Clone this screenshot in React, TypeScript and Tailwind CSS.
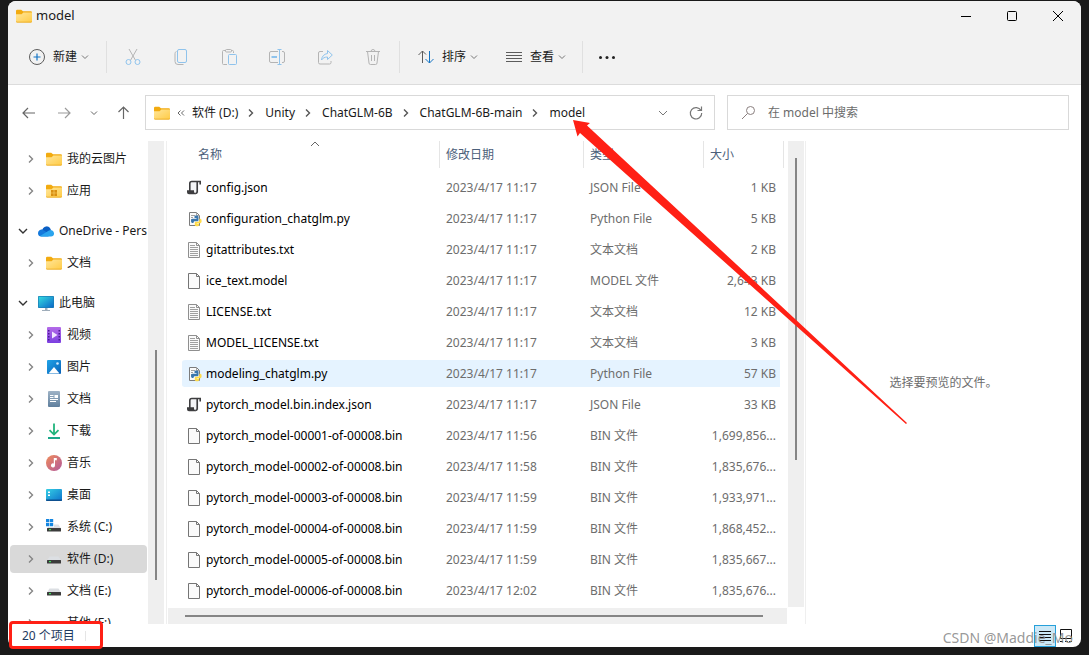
import { ReactNode } from 'react'

/* ---------- icons ---------- */

function Svg({
  children,
  size = 16,
  className = '',
}: {
  children: ReactNode
  size?: number
  className?: string
}) {
  return (
    <svg
      width={size}
      height={size}
      viewBox={`0 0 ${size} ${size}`}
      fill="none"
      className={`shrink-0 ${className}`}
      aria-hidden="true"
    >
      {children}
    </svg>
  )
}

function FolderIcon({ apps = false }: { apps?: boolean }) {
  return (
    <Svg>
      <defs>
        <linearGradient id="folder" x1="0" y1="0" x2="1" y2="1">
          <stop offset="0" stopColor="#ffe69b" />
          <stop offset="1" stopColor="#ffcb45" />
        </linearGradient>
      </defs>
      <path d="M0 3a1.2 1.2 0 0 1 1.2-1.2h4L7 3.3h7.8A1.2 1.2 0 0 1 16 4.5V8H0z" fill="#f2ab10" />
      <path d="M0 6.3h5.6L7.4 4.4H16v8.9a1.2 1.2 0 0 1-1.2 1.2H1.2A1.2 1.2 0 0 1 0 13.3z" fill="url(#folder)" />
      <path d="M0 13.3a1.2 1.2 0 0 0 1.2 1.2h13.6A1.2 1.2 0 0 0 16 13.3v-.3a1 1 0 0 1-1 .7H1a1 1 0 0 1-1-.7z" fill="#e8a317" />
      {apps && (
        <path d="M5 7h2.7v2.7H5zM8.3 7H11v2.7H8.3zM5 10.3h2.7V13H5zM8.3 10.3H11V13H8.3z" fill="#d98f10" />
      )}
    </Svg>
  )
}

function CloudIcon() {
  return (
    <Svg>
      <path d="M4.500 6.500A4.300 4.300 0 0 1 12.600 6l.4 1.500-6 3-5.500.5A3.500 3.500 0 0 1 4.500 6.500z" fill="#0a5fc4" />
      <path d="M0 10.300a3.600 3.600 0 0 1 5.600-3.100L13 12l-3 1.500H3.500A3.400 3.400 0 0 1 0 10.300z" fill="#1479dc" />
      <path d="M2 13l9-5.500a3.300 3.300 0 0 1 5 2.800 3 3 0 0 1-3 3.200H3.400A3 3 0 0 1 2 13z" fill="#2aa4ee" />
    </Svg>
  )
}

function MonitorIcon() {
  return (
    <Svg>
      <defs>
        <linearGradient id="monitor" x1="0" y1="0" x2="1" y2="1">
          <stop offset="0" stopColor="#35dbe0" />
          <stop offset="1" stopColor="#0c68c8" />
        </linearGradient>
      </defs>
      <rect y="1" width="16" height="12" rx="0.8" fill="#1b7cb4" />
      <rect x="0.7" y="1.7" width="14.6" height="10.6" fill="url(#monitor)" />
      <path d="M7 13h2.500v2H12v1H4v-1h3z" fill="#9fadba" />
    </Svg>
  )
}

function VideoIcon() {
  return (
    <Svg>
      <defs>
        <linearGradient id="video" x1="0" y1="0" x2="0" y2="1">
          <stop offset="0" stopColor="#b46be8" />
          <stop offset="1" stopColor="#7b3fe0" />
        </linearGradient>
      </defs>
      <rect x="1" width="14" height="16" rx="1" fill="url(#video)" />
      <path d="M2 3h1.500v1.500H2zM2 6h1.500v1.500H2zM2 9h1.500v1.500H2zM2 12h1.500v1.500H2zM12.500 3H14v1.500h-1.500zM12.500 6H14v1.500h-1.500zM12.500 9H14v1.500h-1.500zM12.500 12H14v1.500h-1.500z" fill="#4b1c93" />
      <path d="M6 4.500 11.500 8 6 11.500z" fill="#f1e6ff" />
    </Svg>
  )
}

function PictureIcon() {
  return (
    <Svg>
      <defs>
        <linearGradient id="picture" x1="0" y1="0" x2="1" y2="1">
          <stop offset="0" stopColor="#20a4e8" />
          <stop offset="1" stopColor="#0961b8" />
        </linearGradient>
      </defs>
      <rect x="1" y="1" width="14" height="14" rx="1" fill="url(#picture)" />
      <path d="M2.500 14.500 8 8l5.500 6.500z" fill="#fff" />
      <circle cx="11.500" cy="4.500" r="1.300" fill="#cfeaff" />
    </Svg>
  )
}

function DocsIcon() {
  return (
    <Svg>
      <defs>
        <linearGradient id="docs" x1="0" y1="0" x2="0" y2="1">
          <stop offset="0" stopColor="#9fb3c6" />
          <stop offset="1" stopColor="#5f7f9d" />
        </linearGradient>
      </defs>
      <rect x="2" width="12" height="16" rx="1" fill="url(#docs)" />
      <path d="M4 4h3.500v1H4zM4 6h3.500v1H4zM8.500 4H12v3H8.500zM4 8h8v1H4zM4 10h6v1H4z" fill="#fff" />
    </Svg>
  )
}

function DownloadIcon() {
  return (
    <Svg>
      <path d="M8 .5v11M3.500 7.200 8 11.600l4.500-4.400" stroke="#20b47c" strokeWidth="1.800" />
      <path d="M2 15h12" stroke="#1ba88a" strokeWidth="1.800" />
    </Svg>
  )
}

function MusicIcon() {
  return (
    <Svg>
      <defs>
        <linearGradient id="music" x1="0" y1="0" x2="1" y2="1">
          <stop offset="0" stopColor="#f08c5a" />
          <stop offset="1" stopColor="#b1589c" />
        </linearGradient>
      </defs>
      <circle cx="8" cy="8" r="8" fill="url(#music)" />
      <path d="M7.800 3h3v2.200H9v5.300a2 2 0 1 1-1.200-1.900z" fill="#fff" />
    </Svg>
  )
}

function DesktopIcon() {
  return (
    <Svg>
      <defs>
        <linearGradient id="desktop" x1="0" y1="0" x2="1" y2="1">
          <stop offset="0" stopColor="#35cfe4" />
          <stop offset="1" stopColor="#0d72cc" />
        </linearGradient>
      </defs>
      <rect y="2" width="16" height="12" rx="1" fill="url(#desktop)" />
      <path d="M0 12.500h16V13a1 1 0 0 1-1 1H1a1 1 0 0 1-1-1z" fill="#0d4f8f" />
      <path d="M2 4.500h2V6H2zM2 7.500h2V9H2z" fill="#fff" />
    </Svg>
  )
}

function DriveIcon({ system = false }: { system?: boolean }) {
  return (
    <Svg>
      <path d="M3.500 5.500h9l2.500 4H1z" fill="#dcdfe3" />
      <rect x="1" y="9" width="14" height="3.5" rx="0.500" fill="#3b3b3b" />
      <rect x="3" y="10" width="2" height="1.200" fill="#3fe05c" />
      {system && (
        <>
          <rect width="8" height="8" fill="#fff" />
          <path d="M0 0h3.300v3.300H0zM3.900 0h3.300v3.300H3.900zM0 3.900h3.300v3.300H0zM3.900 3.900h3.300v3.300H3.900z" fill="#1486e0" />
        </>
      )}
    </Svg>
  )
}

function PageIcon({ lines = false }: { lines?: boolean }) {
  const stroke = lines ? '#8f8f8f' : '#757575'
  return (
    <Svg>
      <path d="M2.500.5h8l3 3v12h-11z" fill="#fafafa" stroke={stroke} />
      <path d="M10.500.5v3h3" stroke={stroke} />
      {lines && (
        <path d="M4 3.500h5M4 5.500h8M4 7.500h8M4 9.500h8M4 11.500h8M4 13.500h8" stroke="#a0a0a0" />
      )}
    </Svg>
  )
}

function JsonIcon() {
  return (
    <Svg>
      <path d="M4 1h9v10.500a2 2 0 0 1-2 2H4z" fill="#f4f5f7" />
      <path d="M3.800 11V3.500a2 2 0 0 1 2-2h8.400v3M11.200 2v9.500a2 2 0 0 1-2 2" stroke="#3d3d3f" strokeWidth="1.600" />
      <path d="M1 10.200h7v1.300A1.500 1.500 0 0 0 9.500 13v1.300H3a2 2 0 0 1-2-2z" fill="#3d3d3f" />
    </Svg>
  )
}

function PythonIcon() {
  return (
    <Svg>
      <path d="M3.500 1.500h7l3 3v10h-10z" fill="#fafafa" stroke="#7c7c7c" />
      <path d="M10.500 1.500v3h3M5 4.500h4M5 6.500h2M5 8.500h1" stroke="#a3a3a3" />
      <path d="M8.500 5.500c0-.8.8-1 2-1s2 .3 2 1.200V9c0 .8-.6 1.300-1.400 1.300H8.800c-.8 0-1.300.6-1.300 1.700H6.300C5.400 12 5 11 5 9.800S5.500 7.700 6.500 7.700h4V7h-2z" fill="#3a76ad" />
      <path d="M13.300 7.800h1c.9 0 1.300.8 1.300 2.200 0 1.300-.5 2.200-1.300 2.200h-3.500v.6h2.300v1.200c0 .8-.9 1.300-2.100 1.300s-2.200-.5-2.200-1.300v-2c0-.8.6-1.300 1.400-1.300H12c.8 0 1.300-.6 1.300-1.400z" fill="#ffdc4c" />
    </Svg>
  )
}

function ChevronDown({ className = '' }: { className?: string }) {
  return (
    <Svg size={8} className={className}>
      <path d="M1 2.500 4 5.500l3-3" stroke="currentColor" />
    </Svg>
  )
}

function ChevronRight({ className = '' }: { className?: string }) {
  return (
    <Svg size={10} className={className}>
      <path d="M3 1.500 6.500 5 3 8.500" stroke="currentColor" strokeWidth="1.400" />
    </Svg>
  )
}

const GRAY = '#b4b4b4'
const BLUE = '#8fc3ec'

const toolIcons = [
  {
    label: '剪切',
    icon: (
      <>
        <path d="M4 0l6.500 11.300M12 0 5.500 11.300" stroke={GRAY} />
        <circle cx="3.500" cy="13" r="2.500" stroke={BLUE} />
        <circle cx="12.500" cy="13" r="2.500" stroke={BLUE} />
      </>
    ),
  },
  {
    label: '复制',
    icon: (
      <>
        <path d="M3.500 2.500c-1 .3-1.500 1-1.500 2v8a3 3 0 0 0 3 3h5.500" stroke={GRAY} />
        <rect x="4.500" y="0.500" width="9" height="13" rx="1.500" stroke={BLUE} />
      </>
    ),
  },
  {
    label: '粘贴',
    icon: (
      <>
        <path d="M6 15.500H2.500a1 1 0 0 1-1-1v-12a1 1 0 0 1 1-1H5m5 0h1.500a1 1 0 0 1 1 1V4" stroke={GRAY} />
        <rect x="4.500" y="0.500" width="6" height="2.500" rx="1" stroke={GRAY} />
        <rect x="7.500" y="5.500" width="8" height="10" rx="1" stroke={BLUE} />
      </>
    ),
  },
  {
    label: '重命名',
    icon: (
      <>
        <path d="M9 13.500H2A1.500 1.500 0 0 1 .5 12V4A1.500 1.500 0 0 1 2 2.500h7M13 2.500h1A1.500 1.500 0 0 1 15.500 4v8a1.500 1.500 0 0 1-1.500 1.500h-1" stroke={GRAY} />
        <path d="M8.500 .5h4M8.500 15.500h4M10.500 .5v15" stroke={BLUE} />
        <path d="M2.500 8H8" stroke={BLUE} strokeWidth="2" />
      </>
    ),
  },
  {
    label: '共享',
    icon: (
      <>
        <path d="M6 2.500H3A1.500 1.500 0 0 0 1.500 4v9.500A1.500 1.500 0 0 0 3 15h9.500a1.500 1.500 0 0 0 1.500-1.500V12" stroke={GRAY} />
        <path d="M10.500 1.500 15.300 6l-4.800 4.500V8C7.500 8 6 9 4.500 11c.3-3.500 2.500-6 6-6.500z" stroke={BLUE} strokeLinejoin="round" />
      </>
    ),
  },
  {
    label: '删除',
    icon: (
      <path d="M1 2.500h14M2.500 2.500 4 14a1.500 1.500 0 0 0 1.500 1.500h5A1.500 1.500 0 0 0 12 14l1.500-11.500M6 2.500a2 2 0 0 1 4 0M6.500 6v6M9.500 6v6" stroke={GRAY} />
    ),
  },
]

/* ---------- data ---------- */

interface NavItem {
  label: string
  icon: ReactNode
  root?: boolean
  selected?: boolean
}

const navGroups: NavItem[][] = [
  [
    { label: '我的云图片', icon: <FolderIcon /> },
    { label: '应用', icon: <FolderIcon apps /> },
  ],
  [
    { label: 'OneDrive - Personal', icon: <CloudIcon />, root: true },
    { label: '文档', icon: <FolderIcon /> },
  ],
  [
    { label: '此电脑', icon: <MonitorIcon />, root: true },
    { label: '视频', icon: <VideoIcon /> },
    { label: '图片', icon: <PictureIcon /> },
    { label: '文档', icon: <DocsIcon /> },
    { label: '下载', icon: <DownloadIcon /> },
    { label: '音乐', icon: <MusicIcon /> },
    { label: '桌面', icon: <DesktopIcon /> },
    { label: '系统 (C:)', icon: <DriveIcon system /> },
    { label: '软件 (D:)', icon: <DriveIcon />, selected: true },
    { label: '文档 (E:)', icon: <DriveIcon /> },
    { label: '其他 (F:)', icon: <DriveIcon /> },
  ],
]

const crumbs = ['软件 (D:)', 'Unity', 'ChatGLM-6B', 'ChatGLM-6B-main', 'model']

const files = [
  { name: 'config.json', date: '2023/4/17 11:17', type: 'JSON File', size: '1 KB' },
  { name: 'configuration_chatglm.py', date: '2023/4/17 11:17', type: 'Python File', size: '5 KB' },
  { name: 'gitattributes.txt', date: '2023/4/17 11:17', type: '文本文档', size: '2 KB' },
  { name: 'ice_text.model', date: '2023/4/17 11:17', type: 'MODEL 文件', size: '2,643 KB' },
  { name: 'LICENSE.txt', date: '2023/4/17 11:17', type: '文本文档', size: '12 KB' },
  { name: 'MODEL_LICENSE.txt', date: '2023/4/17 11:17', type: '文本文档', size: '3 KB' },
  { name: 'modeling_chatglm.py', date: '2023/4/17 11:17', type: 'Python File', size: '57 KB', active: true },
  { name: 'pytorch_model.bin.index.json', date: '2023/4/17 11:17', type: 'JSON File', size: '33 KB' },
  { name: 'pytorch_model-00001-of-00008.bin', date: '2023/4/17 11:56', type: 'BIN 文件', size: '1,699,856...' },
  { name: 'pytorch_model-00002-of-00008.bin', date: '2023/4/17 11:58', type: 'BIN 文件', size: '1,835,676...' },
  { name: 'pytorch_model-00003-of-00008.bin', date: '2023/4/17 11:59', type: 'BIN 文件', size: '1,933,971...' },
  { name: 'pytorch_model-00004-of-00008.bin', date: '2023/4/17 11:59', type: 'BIN 文件', size: '1,868,452...' },
  { name: 'pytorch_model-00005-of-00008.bin', date: '2023/4/17 11:59', type: 'BIN 文件', size: '1,835,667...' },
  { name: 'pytorch_model-00006-of-00008.bin', date: '2023/4/17 12:02', type: 'BIN 文件', size: '1,835,676...' },
]

function fileIcon(name: string) {
  if (name.endsWith('.json')) return <JsonIcon />
  if (name.endsWith('.py')) return <PythonIcon />
  return <PageIcon lines={name.endsWith('.txt')} />
}

/* ---------- sections ---------- */

function TitleBar() {
  return (
    <header className="flex h-[29px] items-center pl-2">
      <FolderIcon />
      <h1 className="ml-1 flex-1 text-[13px]">model</h1>
      <button aria-label="最小化" className="flex h-7 w-[46px] items-center justify-center">
        <Svg size={10}>
          <path d="M0 5.500h10" stroke="#000" />
        </Svg>
      </button>
      <button aria-label="最大化" className="flex h-7 w-[46px] items-center justify-center">
        <Svg size={10}>
          <rect x="0.500" y="0.500" width="9" height="9" rx="1" stroke="#000" />
        </Svg>
      </button>
      <button aria-label="关闭" className="flex h-7 w-[46px] items-center justify-center">
        <Svg size={10}>
          <path d="m0 0 10 10M10 0 0 10" stroke="#000" />
        </Svg>
      </button>
    </header>
  )
}

function Toolbar() {
  return (
    <div className="flex h-[55px] items-center border-b border-[#dcdcdc] pl-[21px]">
      <button className="flex items-center gap-2">
        <Svg>
          <circle cx="8" cy="8" r="7.500" stroke="#5c5c5c" />
          <path d="M8 4.500v7M4.500 8h7" stroke="#1474c4" strokeWidth="1.200" />
        </Svg>
        新建
        <ChevronDown className="-ml-1 text-[#777]" />
      </button>
      <div className="ml-[17px] mr-[18px] h-8 w-px bg-[#e0e0e0]" />
      <div className="flex gap-8">
        {toolIcons.map((tool) => (
          <button key={tool.label} aria-label={tool.label}>
            <Svg>{tool.icon}</Svg>
          </button>
        ))}
      </div>
      <div className="mx-[18px] h-8 w-px bg-[#e0e0e0]" />
      <button className="flex items-center gap-2">
        <Svg>
          <path d="M4.500 14V2M.5 6l4-4L8 5.500" stroke="#5c5c5c" />
          <path d="M11.500 2v12M7.500 10l4 4 4-4" stroke="#1474c4" />
        </Svg>
        排序
        <ChevronDown className="-ml-1 text-[#777]" />
      </button>
      <button className="ml-7 flex items-center gap-2">
        <Svg>
          <path d="M0 3.500h16M0 6.500h16M0 9.500h16M0 12.500h16" stroke="#5c5c5c" />
        </Svg>
        查看
        <ChevronDown className="-ml-1 text-[#777]" />
      </button>
      <div className="mx-4 h-8 w-px bg-[#e0e0e0]" />
      <button aria-label="更多">
        <Svg>
          <circle cx="1.500" cy="8.500" r="1.500" fill="#222" />
          <circle cx="8" cy="8.500" r="1.500" fill="#222" />
          <circle cx="14.500" cy="8.500" r="1.500" fill="#222" />
        </Svg>
      </button>
    </div>
  )
}

function AddressRow() {
  return (
    <div className="flex h-14 items-start pl-[13px] pr-3 pt-[10px]">
      <div className="flex h-[35px] w-[124px] shrink-0 items-center text-[#666]">
        <button aria-label="后退">
          <Svg>
            <path d="M14 8H2M7 3 2 8l5 5" stroke="#666" strokeWidth="1.200" />
          </Svg>
        </button>
        <button aria-label="前进" className="ml-5">
          <Svg>
            <path d="M1 8h12M8 3l5 5-5 5" stroke="#9a9a9a" strokeWidth="1.200" />
          </Svg>
        </button>
        <button aria-label="最近浏览的位置" className="ml-[17px]">
          <ChevronDown />
        </button>
        <button aria-label="上移" className="ml-[17px]">
          <Svg>
            <path d="M8.500 14V2M3.500 7l5-5 5 5" stroke="#666" strokeWidth="1.200" />
          </Svg>
        </button>
      </div>
      <nav aria-label="路径" className="flex h-[35px] min-w-0 flex-[550] items-center border border-[#d9d9d9] pl-2 pr-[10px]">
        <FolderIcon />
        <Svg size={8} className="mx-[7px]">
          <path d="M3.500 1.500 1 4l2.500 2.500M7 1.500 4.500 4 7 6.500" stroke="#666" />
        </Svg>
        <ol className="flex flex-1 items-center whitespace-nowrap">
          {crumbs.map((crumb, i) => (
            <li key={crumb} className="flex items-center">
              {i > 0 && <ChevronRight className="ml-2 mr-[9px] text-[#555]" />}
              <a href="#">{crumb}</a>
            </li>
          ))}
        </ol>
        <button aria-label="历史记录" className="mr-5">
          <Svg size={10}>
            <path d="m1 3 4 4 4-4" stroke="#777" />
          </Svg>
        </button>
        <button aria-label="刷新">
          <Svg>
            <path d="M13 5.500A5.700 5.700 0 1 0 13.700 8M13.500 1.500v4h-4" stroke="#777" strokeWidth="1.200" />
          </Svg>
        </button>
      </nav>
      <label className="ml-3 flex h-[35px] flex-[326] items-center border border-[#d9d9d9] pl-[14px]">
        <Svg className="mr-1.5">
          <circle cx="8.500" cy="5.500" r="4" stroke="#8a7f7f" />
          <path d="M5.500 8.500 0 14" stroke="#8a7f7f" />
        </Svg>
        <input
          type="search"
          aria-label="搜索"
          placeholder="在 model 中搜索"
          className="w-full px-1 outline-none placeholder:text-[#6b6b6b]"
        />
      </label>
    </div>
  )
}

function NavPane() {
  return (
    <aside className="flex w-[156px] shrink-0">
      <nav aria-label="导航" className="flex min-w-0 flex-1 flex-col gap-2 overflow-hidden pl-0.5 pr-px pt-0.5">
        {navGroups.map((group, g) => (
          <ul key={g}>
            {group.map((item) => (
              <li key={item.label} className="h-8 py-0.5">
                <a
                  href="#"
                  className={`flex h-7 items-center gap-[5px] overflow-hidden whitespace-nowrap rounded-sm ${
                    item.root ? 'pl-2' : 'pl-4'
                  } ${item.selected ? 'bg-[#d9d9d9]' : ''}`}
                >
                  {item.root ? (
                    <Svg size={10} className="mr-[5px]">
                      <path d="m1 3 4 4 4-4" stroke="#333" strokeWidth="1.400" />
                    </Svg>
                  ) : (
                    <ChevronRight className="mr-[5px] text-[#858585]" />
                  )}
                  {item.icon}
                  {item.label}
                </a>
              </li>
            ))}
          </ul>
        ))}
      </nav>
      <div className="flex w-4 shrink-0 justify-center bg-[#efefef] pt-[209px]">
        <div className="h-[230px] w-0.5 bg-[#858585]" />
      </div>
    </aside>
  )
}

function FileList() {
  return (
    <main className="ml-0.5 flex w-[640px] shrink-0 flex-col border-x border-[#efefef]">
      <div className="flex min-h-0 flex-1">
        <div className="relative flex-1 overflow-hidden pl-[15px]">
          <Svg size={10} className="absolute left-[143px] top-0">
            <path d="m1 5 4-4 4 4" stroke="#666" />
          </Svg>
          <table className="w-[602px] table-fixed border-separate border-spacing-0 text-left">
            <thead className="text-[#4c607a]">
              <tr className="h-[31px] align-top">
                <th className="w-[258px] pl-4 font-normal">
                  <div className="h-[27px] border-r border-[#e5e5e5] leading-[27px]">名称</div>
                </th>
                <th className="w-36 font-normal">
                  <div className="h-[27px] border-r border-[#e5e5e5] pl-1.5 leading-[27px]">修改日期</div>
                </th>
                <th className="w-[120px] font-normal">
                  <div className="h-[27px] border-r border-[#e5e5e5] pl-1.5 leading-[27px]">类型</div>
                </th>
                <th className="font-normal">
                  <div className="h-[27px] border-r border-[#e5e5e5] pl-1.5 leading-[27px]">大小</div>
                </th>
              </tr>
            </thead>
            <tbody className="whitespace-nowrap text-[#6d6d6d]">
              {files.map((file) => (
                <tr
                  key={file.name}
                  className={`h-[31px] *:border-y-2 *:border-transparent *:bg-clip-padding ${
                    file.active ? '*:bg-[#e5f3ff]' : ''
                  }`}
                >
                  <td className="rounded-l p-0 pl-1 text-black">
                    <div className="flex items-center gap-1">
                      {fileIcon(file.name)}
                      {file.name}
                    </div>
                  </td>
                  <td className="p-0 pl-1.5">{file.date}</td>
                  <td className="p-0 pl-1.5">{file.type}</td>
                  <td className="rounded-r border-r-4 p-0 pr-1 text-right">{file.size}</td>
                </tr>
              ))}
            </tbody>
          </table>
        </div>
        <div className="mr-px flex w-4 shrink-0 justify-center bg-[#efefef] pt-[17px]">
          <div className="h-[302px] w-0.5 bg-[#858585]" />
        </div>
      </div>
      <div className="ml-px mr-[18px] mt-px flex h-4 items-center bg-[#efefef] pl-[17px] pr-6">
        <div className="h-0.5 w-full bg-[#858585]" />
      </div>
    </main>
  )
}

function StatusBar() {
  return (
    <footer className="relative flex h-[23px] shrink-0 items-center pl-[14px] pr-[7px] text-[#1e3a5f]">
      <span>20 个项目</span>
      <div className="ml-[10px] h-[10px] w-px bg-[#e5e5e5]" />
      <button aria-label="详细信息" className="ml-auto flex size-[22px] items-center justify-center border border-[#26a0da] bg-[#cce8f6]">
        <Svg>
          <path d="M2 3.500h12M2 6.500h12M2 9.500h12M2 12.500h12" stroke="#111" />
        </Svg>
      </button>
      <button aria-label="大图标" className="ml-0.5">
        <Svg>
          <path d="M2.500 1.500h11v9h-11zM2 13.500h3M7 13.500h3M11 13.500h3" stroke="#111" />
        </Svg>
      </button>
      <p className="absolute right-2 top-1.5 text-sm leading-4 text-[#8c8c8c]/90">CSDN @Maddie_Mo</p>
    </footer>
  )
}

export default function App() {
  return (
    <div className="relative h-screen bg-[#1a1a1a] px-2 pb-2 pt-px font-['Noto_Sans','Noto_Sans_CJK_SC',sans-serif] text-xs text-[#1a1a1a]">
      <div className="flex h-full flex-col overflow-hidden rounded-lg bg-white">
        <div className="bg-[#f2f2f2]">
          <TitleBar />
          <Toolbar />
        </div>
        <AddressRow />
        <div className="flex min-h-0 flex-1">
          <NavPane />
          <FileList />
          <section className="flex min-w-0 flex-1 items-center justify-center text-[#6d6d6d]">
            选择要预览的文件。
          </section>
        </div>
        <StatusBar />
      </div>
      {/* hand-drawn callouts */}
      <div className="pointer-events-none absolute bottom-1.5 left-[9px] h-7 w-[94px] rounded-sm border-3 border-[#ff2015]" />
      <svg
        width="336"
        height="306"
        viewBox="0 0 336 306"
        className="pointer-events-none absolute left-[572px] top-[119px]"
        aria-hidden="true"
      >
        <path d="M1 1 18 4 15 6.500 335 304 334 305 8 14 5.500 17.500z" fill="#ff2015" />
      </svg>
    </div>
  )
}
